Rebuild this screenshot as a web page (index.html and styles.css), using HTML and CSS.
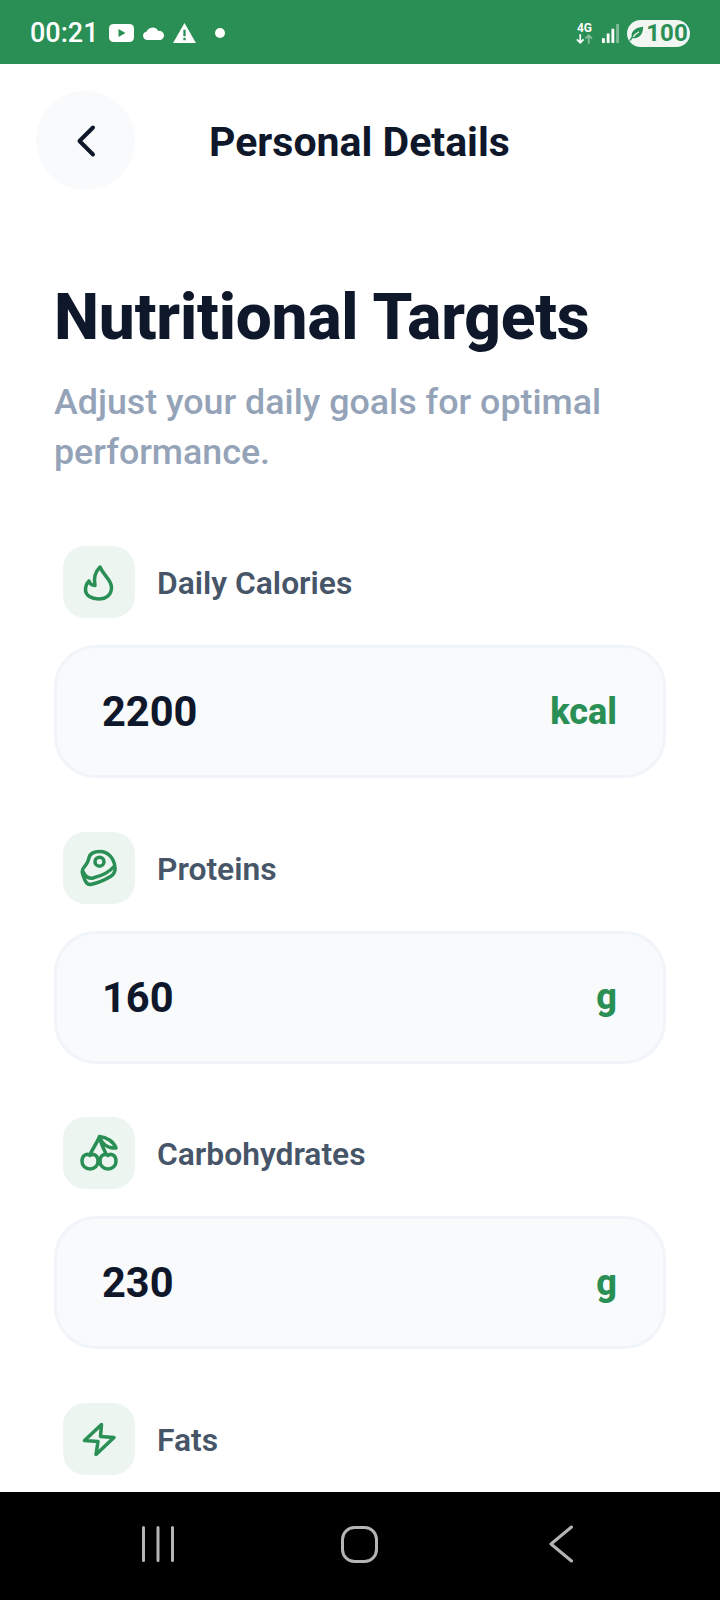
FILE: index.html
```html
<!DOCTYPE html>
<html lang="en">
<head>
    <meta charset="UTF-8">
    <meta name="viewport" content="width=device-width, initial-scale=1.0">
    <title>Nutritional Targets</title>
    <link rel="stylesheet" href="styles.css">
</head>
<body>
    <div class="phone">
        <div class="status-bar">
            <span class="clock">00:21</span>
            <svg class="st-yt" width="25" height="18" viewBox="0 0 25 18"><rect width="25" height="18" rx="4.500" fill="#fff"/><path d="M9.500 5v8l7-4z" fill="#2a8f55"/></svg>
            <svg class="st-cloud" width="23" height="13" viewBox="0 0 24 14"><path d="M5 14a4.500 4.500 0 0 1-.6-8.900A7 7 0 0 1 17 4.200 4.900 4.900 0 0 1 19.500 14z" fill="#fff"/></svg>
            <svg class="st-warn" width="23" height="20" viewBox="0 0 24 21"><path d="M12 0l12 21H0z" fill="#fff"/><path d="M10.800 7h2.400v7h-2.400zM10.800 15.500h2.400v2.500h-2.400z" fill="#2a8f55"/></svg>
            <span class="st-dot"></span>
            <div class="status-right">
                <div class="net">
                    <span class="net-label">4G</span>
                    <svg width="17" height="10" viewBox="0 0 18 10"><path d="M4.500 0v9M1 5.500l3.500 3.500L8 5.500" fill="none" stroke="#fff" stroke-width="1.800"/><path d="M13.500 10V1M10 4.500L13.500 1 17 4.500" fill="none" stroke="#fff" stroke-opacity=".45" stroke-width="1.800"/></svg>
                </div>
                <svg class="signal" width="17" height="19" viewBox="0 0 18 20"><rect x="0" y="15" width="3" height="5" fill="#fff"/><rect x="5" y="10" width="3" height="10" fill="#fff"/><rect x="10" y="5" width="3" height="15" fill="#fff"/><rect x="15" y="0" width="3" height="20" fill="#fff" fill-opacity=".4"/></svg>
                <div class="battery">
                    <svg width="15" height="15" viewBox="0 0 18 18"><path d="M3.500 14.500C1.500 8 6 2 17 1c0 9-5 15-13.500 13.500z" fill="#2a8f55"/><path d="M1 17.500C4 12.500 8 9 12 7" fill="none" stroke="#2a8f55" stroke-width="1.800"/><path d="M5 13C7 10.500 9.500 8.500 12 7" fill="none" stroke="#f1f6f3" stroke-width="1.500"/></svg>
                    <span>100</span>
                </div>
            </div>
        </div>

        <div class="top-bar">
            <button class="back-btn">
                <svg width="26" height="34" viewBox="0 0 26 34"><path d="M20 3.500L6.500 17 20 30.500" fill="none" stroke="#0f172a" stroke-width="4" stroke-linecap="round" stroke-linejoin="round"/></svg>
            </button>
            <div class="top-title">Personal Details</div>
        </div>

        <div class="content">
            <h1>Nutritional Targets</h1>
            <p class="subtitle">Adjust your daily goals for optimal performance.</p>

            <div class="field">
                <div class="field-label">
                    <div class="icon-box">
                        <svg width="36" height="40" viewBox="0 0 36 40"><path d="M19 5c-5 5-6.500 11-5 18.500-3 0-5-1.500-6-4.500-2 2-3.500 5.500-3.500 9 0 5.500 6 9 13 9 8 0 13-4.500 13-11.500 0-8-7.500-11-11.500-20.500z" fill="none" stroke="#2a8f55" stroke-width="3.500" stroke-linejoin="round"/></svg>
                    </div>
                    <label>Daily Calories</label>
                </div>
                <div class="input-box">
                    <span class="value">2200</span>
                    <span class="unit">kcal</span>
                </div>
            </div>

            <div class="field">
                <div class="field-label">
                    <div class="icon-box">
                        <svg width="40" height="40" viewBox="0 0 40 40"><path d="M21 3.500c-6 0-10 2-11 6-.5 4-3 7.500-5.500 10.500-1.500 2-1.500 5 0 8.500 1.500 5 3.500 8.500 7 8 5-1 15-5 20-8 4-2.500 5-6 4.500-9.500C35 10 29 3.500 21 3.500z" fill="none" stroke="#2a8f55" stroke-width="3.500" stroke-linejoin="round"/><path d="M4 23.500c2 5 5 7.500 10 6.500 8-2 16-5.500 21-11.500" fill="none" stroke="#2a8f55" stroke-width="3.500"/><circle cx="20.500" cy="13.700" r="4.500" fill="none" stroke="#2a8f55" stroke-width="3.500"/></svg>
                    </div>
                    <label>Proteins</label>
                </div>
                <div class="input-box">
                    <span class="value">160</span>
                    <span class="unit">g</span>
                </div>
            </div>

            <div class="field">
                <div class="field-label">
                    <div class="icon-box">
                        <svg width="40" height="40" viewBox="0 0 40 40"><path d="M20.500 3.500C18 10 14 15 11 21.500M20.500 3.500c1 7 4 12 7 18M20.500 3.500c7 .5 14 5 16.500 11.500-8 .5-14-4-16.500-11.500z" fill="none" stroke="#2a8f55" stroke-width="3.500" stroke-linejoin="round"/><path d="M11 22.500c2-2 8-1.500 8 6 0 4-3.500 7.500-8 7.500s-8-3.500-8-7.500c0-7.500 6-8 8-6zM29 22.500c2-2 8-1.500 8 6 0 4-3.500 7.500-8 7.500s-8-3.500-8-7.500c0-7.500 6-8 8-6z" fill="none" stroke="#2a8f55" stroke-width="3.500" stroke-linejoin="round"/></svg>
                    </div>
                    <label>Carbohydrates</label>
                </div>
                <div class="input-box">
                    <span class="value">230</span>
                    <span class="unit">g</span>
                </div>
            </div>

            <div class="field">
                <div class="field-label">
                    <div class="icon-box">
                        <svg width="36" height="38" viewBox="0 0 36 38"><path d="M20.500 4.500L3.500 20.500l13.500 1-2 13 18-17-13.500-1z" fill="none" stroke="#2a8f55" stroke-width="3.500" stroke-linejoin="round"/></svg>
                    </div>
                    <label>Fats</label>
                </div>
            </div>
        </div>

        <div class="nav-bar">
            <svg width="32" height="36" viewBox="0 0 32 36"><path d="M1.500 1.500v33M16 1.500v33M30.500 1.500v33" stroke="#b5b5b5" stroke-width="3" stroke-linecap="round"/></svg>
            <svg class="nav-home" width="37" height="37" viewBox="0 0 37 37"><rect x="1.500" y="1.500" width="34" height="34" rx="12" fill="none" stroke="#b5b5b5" stroke-width="3"/></svg>
            <svg class="nav-back" width="24" height="38" viewBox="0 0 24 38"><path d="M22.500 2L2 19l20.500 17" fill="none" stroke="#b5b5b5" stroke-width="3" stroke-linecap="round" stroke-linejoin="round"/></svg>
        </div>
    </div>
</body>
</html>
```

FILE: styles.css
```css
body, html {
    margin: 0;
    padding: 0;
    height: 100%;
    font-family: 'Roboto', sans-serif;
    background: #fff;
}

.phone {
    width: 720px;
    height: 1600px;
    display: flex;
    flex-direction: column;
    overflow: hidden;
}

.status-bar {
    height: 64px;
    flex-shrink: 0;
    background: #2a8f55;
    color: #fff;
    display: flex;
    align-items: center;
    padding: 2px 30px 0;
    box-sizing: border-box;
}

.clock {
    font-size: 27px;
    font-weight: 500;
    margin-right: 10px;
}

.st-cloud {
    margin-left: 8px;
}

.st-warn {
    margin-left: 8px;
}

.st-dot {
    width: 10px;
    height: 10px;
    border-radius: 50%;
    background: #fff;
    margin-left: 19px;
}

.status-right {
    margin-left: auto;
    display: flex;
    align-items: center;
}

.net {
    display: flex;
    flex-direction: column;
    align-items: center;
    margin-right: 9px;
}

.net-label {
    font-size: 12px;
    font-weight: 700;
    line-height: 11px;
}

.signal {
    margin-right: 8px;
}

.battery {
    background: #f1f6f3;
    color: #2a8f55;
    height: 27px;
    width: 63px;
    border-radius: 14px;
    display: flex;
    align-items: center;
    justify-content: center;
    gap: 2px;
    font-size: 24px;
    font-weight: 700;
}

.top-bar {
    display: flex;
    align-items: center;
    padding: 27px 36px 0;
    flex-shrink: 0;
}

.back-btn {
    width: 99px;
    height: 99px;
    border: none;
    border-radius: 50%;
    background: #f8fafc;
    padding: 0;
    display: flex;
    align-items: center;
    justify-content: center;
    margin-right: 74px;
}

.top-title {
    font-size: 41px;
    font-weight: 700;
    color: #0f172a;
    padding-top: 2px;
}

.content {
    flex: 1;
    overflow: hidden;
    padding: 0 54px;
}

h1 {
    margin: 90px 0 0;
    font-size: 64px;
    line-height: 76px;
    font-weight: 800;
    letter-spacing: -0.2px;
    color: #0f172a;
}

.subtitle {
    margin: 21px 0 0;
    font-size: 35.800px;
    line-height: 50px;
    font-weight: 500;
    color: #94a3b8;
}

.field {
    margin-bottom: 53.500px;
}

.subtitle + .field {
    margin-top: 69px;
}

.field-label {
    display: flex;
    align-items: center;
    gap: 22px;
    padding-left: 9px;
    margin-bottom: 27px;
}

.icon-box {
    width: 72px;
    height: 72px;
    border-radius: 22px;
    background: #edf5f1;
    display: flex;
    align-items: center;
    justify-content: center;
}

.field-label label {
    font-size: 31.800px;
    font-weight: 600;
    color: #475569;
    padding-top: 2px;
}

.input-box {
    height: 133px;
    box-sizing: border-box;
    border: 3px solid #f1f5f9;
    border-radius: 42px;
    background: #f8fafc;
    display: flex;
    align-items: center;
    justify-content: space-between;
    padding: 0 46px 0 45px;
}

.value {
    font-size: 41.600px;
    font-weight: 700;
    color: #0f172a;
}

.unit {
    font-size: 36px;
    font-weight: 800;
    color: #2a8f55;
}

.nav-bar {
    height: 108px;
    flex-shrink: 0;
    background: #000;
    display: flex;
    align-items: center;
    padding: 0 0 4px 142px;
    box-sizing: border-box;
}

.nav-home {
    margin-left: 167px;
}

.nav-back {
    margin-left: 171px;
}
```
